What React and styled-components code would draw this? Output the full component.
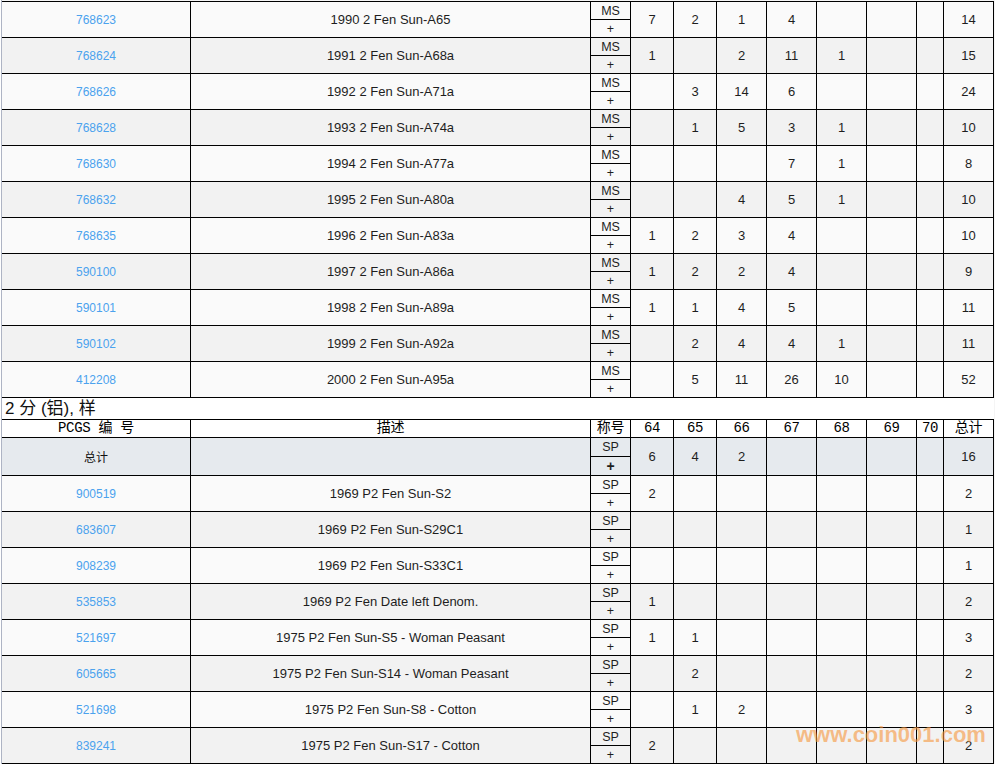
import React from "react";
import styled, { createGlobalStyle } from "styled-components";

const GlobalStyle = createGlobalStyle`
  html, body {
    margin: 0;
    padding: 0;
    background: #ffffff;
  }
`;

const COLS = "189px 400px 40px 43px 43px 50px 50px 50px 50px 27px 50px";
const GRADES = ["64", "65", "66", "67", "68", "69", "70"];

const Page = styled.div`
  position: relative;
  margin-left: 1px;
  padding-top: 1px;
  border-left: 1px solid #aeb4c4;
  background: #f5f5f5;
  font-family: "Liberation Sans", Arial, "Noto Sans CJK SC", sans-serif;
  color: #1e1e1e;
`;

const Block = styled.div`
  border-top: 1px solid #000;
  width: 992px;
`;

const Row = styled.div`
  display: grid;
  grid-template-columns: ${COLS};
  height: ${(p) => p.$h || 36}px;
  box-sizing: border-box;
  border-bottom: 1px solid #000;
  background: ${(p) =>
    p.$tone === "sum" ? "#e6eaee" : p.$tone === "head" ? "#ffffff" : p.$tone === "dark" ? "#f2f2f2" : "#fafafa"};
`;

const Cell = styled.div`
  border-right: 1px solid #000;
  display: flex;
  align-items: center;
  justify-content: center;
  font-size: 13px;
  overflow: hidden;
  white-space: nowrap;
`;

const HeadCell = styled(Cell)`
  font-family: "Liberation Mono", "Noto Sans CJK SC", monospace;
  font-size: 14px;
  font-weight: 400;
  color: #000;
  line-height: 17px;
  letter-spacing: -0.3px;
`;

const IdLink = styled.a`
  color: #4ba2ee;
  font-size: 12px;
  text-decoration: none;
`;

const SumLabel = styled.span`
  font-family: "Noto Sans CJK SC", sans-serif;
  font-size: 12px;
  color: #111;
`;

const GradeCell = styled.div`
  border-right: 1px solid #000;
  display: flex;
  flex-direction: column;
`;

const GradeHalf = styled.div`
  flex: 1;
  display: flex;
  align-items: center;
  justify-content: center;
  font-size: ${(p) => (p.$bold ? 14 : 12.5)}px;
  font-weight: ${(p) => (p.$bold ? 700 : 400)};
  & + & {
    border-top: 1px solid #000;
  }
`;

const TitleRow = styled.div`
  height: 22px;
  box-sizing: border-box;
  border-bottom: 1px solid #000;
  background: #ffffff;
  padding-left: 3px;
  font-size: 17px;
  line-height: 21px;
  color: #111;
`;

const Watermark = styled.div`
  position: absolute;
  left: 794px;
  top: 722px;
  font-family: "Liberation Sans", Arial, sans-serif;
  font-weight: 700;
  font-size: 22px;
  color: rgba(247, 150, 60, 0.6);
  pointer-events: none;
`;

const msRows = [
  ["768623", "1990 2 Fen Sun-A65", ["7", "2", "1", "4", "", "", ""], "14"],
  ["768624", "1991 2 Fen Sun-A68a", ["1", "", "2", "11", "1", "", ""], "15"],
  ["768626", "1992 2 Fen Sun-A71a", ["", "3", "14", "6", "", "", ""], "24"],
  ["768628", "1993 2 Fen Sun-A74a", ["", "1", "5", "3", "1", "", ""], "10"],
  ["768630", "1994 2 Fen Sun-A77a", ["", "", "", "7", "1", "", ""], "8"],
  ["768632", "1995 2 Fen Sun-A80a", ["", "", "4", "5", "1", "", ""], "10"],
  ["768635", "1996 2 Fen Sun-A83a", ["1", "2", "3", "4", "", "", ""], "10"],
  ["590100", "1997 2 Fen Sun-A86a", ["1", "2", "2", "4", "", "", ""], "9"],
  ["590101", "1998 2 Fen Sun-A89a", ["1", "1", "4", "5", "", "", ""], "11"],
  ["590102", "1999 2 Fen Sun-A92a", ["", "2", "4", "4", "1", "", ""], "11"],
  ["412208", "2000 2 Fen Sun-A95a", ["", "5", "11", "26", "10", "", ""], "52"],
];

const spRows = [
  ["900519", "1969 P2 Fen Sun-S2", ["2", "", "", "", "", "", ""], "2"],
  ["683607", "1969 P2 Fen Sun-S29C1", ["", "", "", "", "", "", ""], "1"],
  ["908239", "1969 P2 Fen Sun-S33C1", ["", "", "", "", "", "", ""], "1"],
  ["535853", "1969 P2 Fen Date left Denom.", ["1", "", "", "", "", "", ""], "2"],
  ["521697", "1975 P2 Fen Sun-S5 - Woman Peasant", ["1", "1", "", "", "", "", ""], "3"],
  ["605665", "1975 P2 Fen Sun-S14 - Woman Peasant", ["", "2", "", "", "", "", ""], "2"],
  ["521698", "1975 P2 Fen Sun-S8 - Cotton", ["", "1", "2", "", "", "", ""], "3"],
  ["839241", "1975 P2 Fen Sun-S17 - Cotton", ["2", "", "", "", "", "", ""], "2"],
];

const CoinRow = ({ row, grade, index }) => {
  const [id, desc, counts, total] = row;
  return (
    <Row $tone={index % 2 ? "dark" : "light"}>
      <Cell>
        <IdLink href="#">{id}</IdLink>
      </Cell>
      <Cell>{desc}</Cell>
      <GradeCell>
        <GradeHalf>{grade}</GradeHalf>
        <GradeHalf>+</GradeHalf>
      </GradeCell>
      {counts.map((c, i) => (
        <Cell key={i}>{c}</Cell>
      ))}
      <Cell>{total}</Cell>
    </Row>
  );
};

const App = () => {
  return (
    <>
      <GlobalStyle />
      <Page>
        <Block>
          {msRows.map((r, i) => (
            <CoinRow key={r[0]} row={r} grade="MS" index={i} />
          ))}
          <TitleRow>2 分 (铝), 样</TitleRow>
          <Row $h={18} $tone="head">
            <HeadCell>PCGS 编 号</HeadCell>
            <HeadCell>描述</HeadCell>
            <HeadCell>称号</HeadCell>
            {GRADES.map((g) => (
              <HeadCell key={g}>{g}</HeadCell>
            ))}
            <HeadCell>总计</HeadCell>
          </Row>
          <Row $h={38} $tone="sum">
            <Cell>
              <SumLabel>总计</SumLabel>
            </Cell>
            <Cell />
            <GradeCell>
              <GradeHalf>SP</GradeHalf>
              <GradeHalf $bold>+</GradeHalf>
            </GradeCell>
            {["6", "4", "2", "", "", "", ""].map((c, i) => (
              <Cell key={i}>{c}</Cell>
            ))}
            <Cell>16</Cell>
          </Row>
          {spRows.map((r, i) => (
            <CoinRow key={r[0]} row={r} grade="SP" index={i} />
          ))}
        </Block>
        <Watermark>www.coin001.com</Watermark>
      </Page>
    </>
  );
};

export default App;
